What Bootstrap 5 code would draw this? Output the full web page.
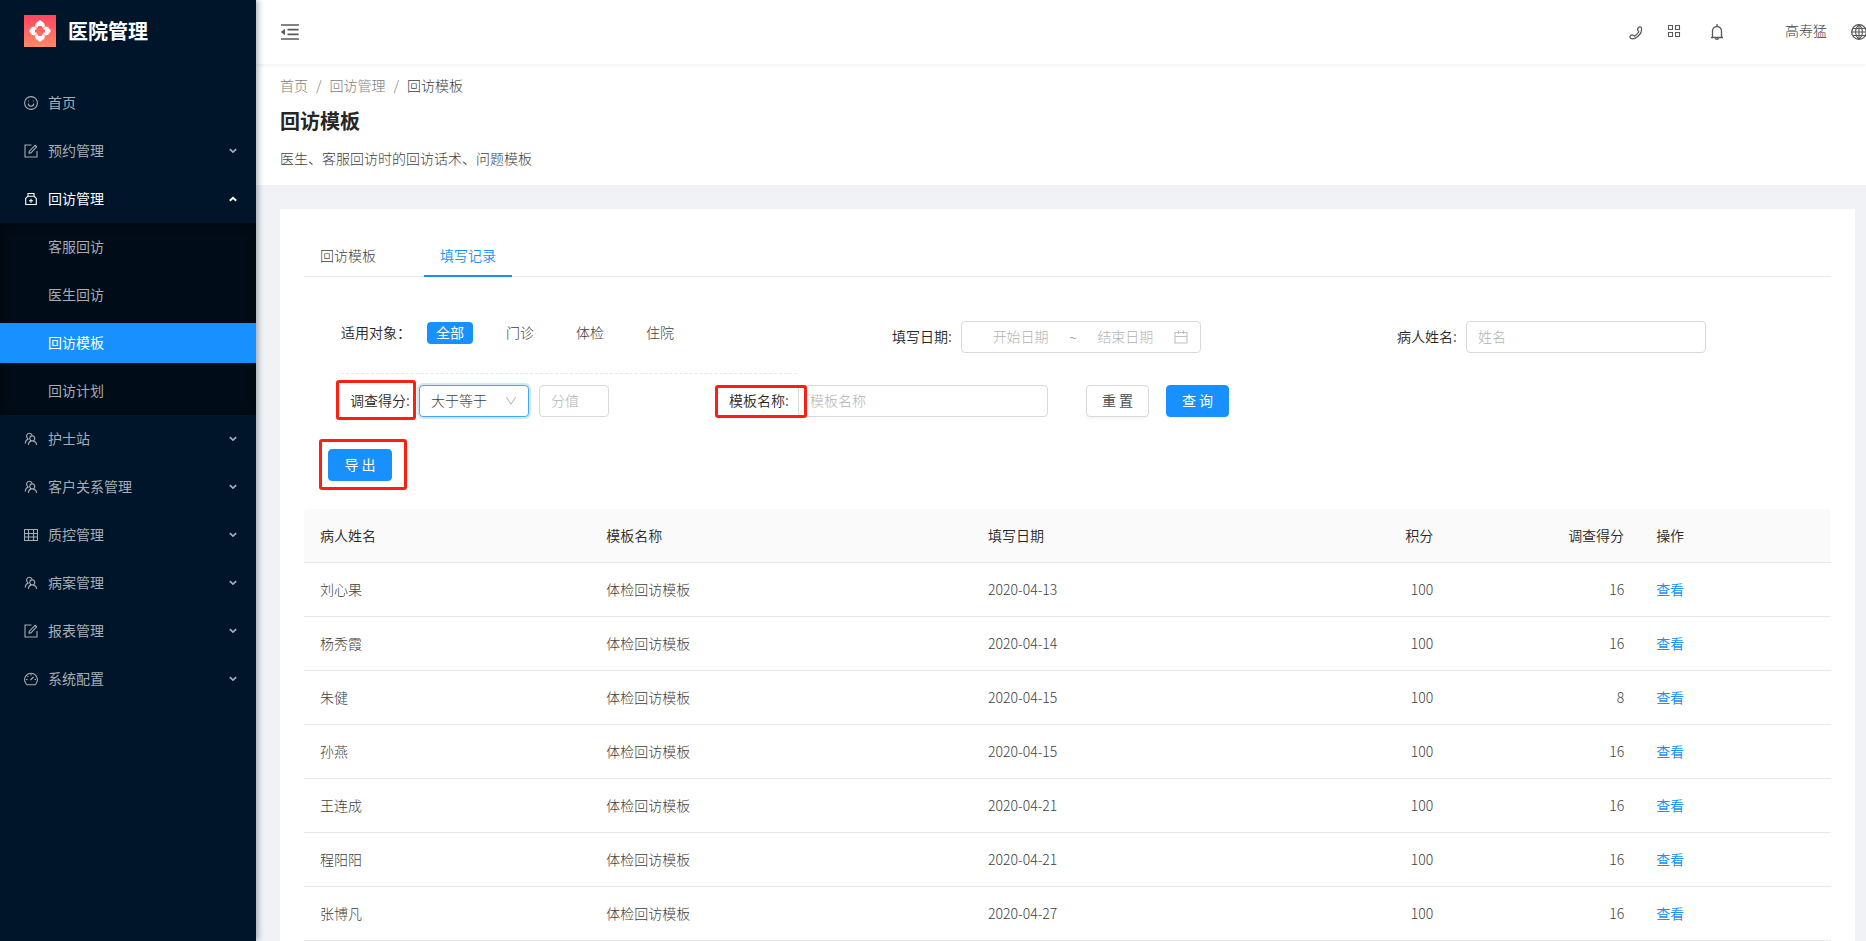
<!DOCTYPE html>
<html lang="zh-CN">
<head>
<meta charset="utf-8">
<meta name="viewport" content="width=device-width, initial-scale=1">
<title>医院管理 - 回访模板</title>
<link href="https://cdn.jsdelivr.net/npm/bootstrap@5.3.0/dist/css/bootstrap.min.css" rel="stylesheet">
<style>
  body { font-family: "Noto Sans CJK SC", sans-serif; font-size: 14px; line-height: 22px; font-weight: 300; color: #404040; background: #f0f2f5; }
  a { color: inherit; text-decoration: none; }
  svg { display: block; flex: none; }
  .ico { fill: none; stroke: currentColor; stroke-width: 1.1; }

  /* Sidebar */
  .side { width: 256px; background: #001529; color: #a6adb4; box-shadow: 2px 0 6px rgba(0,21,41,.35); z-index: 2; font-weight: 400; }
  .brand { height: 64px; padding: 0 24px 2px; gap: 12px; color: #fff; font-size: 20px; font-weight: 700; }
  .menu { padding-top: 15px; }
  .menu a { height: 40px; margin: 4px 0; padding: 0 19px 0 24px; gap: 10px; }
  .menu a span { padding-bottom: 2px; }
  .menu .open { color: #fff; }
  .sub { background: #000c17; box-shadow: inset 0 2px 8px rgba(0,0,0,.45); padding: 0; margin: 0; display: flow-root; }
  .sub li { height: 48px; padding: 4px 0; }
  .menu .sub a { margin: 0; padding: 0 0 2px 48px; }
  .sub a.active { background: #1890ff; color: #fff; }

  /* Header */
  .topbar { height: 64px; padding-left: 24px; background: #fff; box-shadow: 0 1px 4px rgba(0,21,41,.08); z-index: 1; }
  .tools > * { color: #595959; padding: 0; border: 0; background: none; }
  .tools .bell { margin-left: 28px; }
  .tools .user { margin-left: 60px; padding-bottom: 4px; color: #404040; }
  .tools .grid-btn { padding-bottom: 2px; }
  .tools .call { padding-top: 2px; }
  .intro { padding: 10px 24px 16px; background: #fff; }
  .crumbs { --bs-breadcrumb-divider: "/"; --bs-breadcrumb-item-padding-x: 8px; font-size: 14px; margin: 0; color: #7d7d7d; }
  .crumbs .breadcrumb-item + .breadcrumb-item::before { color: #7d7d7d; }
  .crumbs .active { color: #404040; }
  .intro h1 { font-size: 20px; line-height: 28px; font-weight: 700; color: #262626; margin: 11px 0 12px; }

  /* Content panel */
  .panel { background: #fff; margin: 24px 11px 0 24px; padding: 24px 24px 0; }
  .tabs { border-bottom: 1px solid #e8e8e8; gap: 32px; }
  .tabs .nav-link { color: #404040; height: 44px; padding: 11px 16px 9px; border: 0; border-bottom: 2px solid transparent; border-radius: 0; margin-bottom: -1px; }
  .tabs .nav-link.active { color: #1890ff; background: none; border-bottom-color: #1890ff; font-weight: 350; }
  .filters { margin: 44px 6px 0; }
  .filters .who { padding: 1px 18px 0 31px; }
  .who-line { border-bottom: 1px dashed #e8e8e8; height: 52px; gap: 24px; }
  .who-line legend { font-size: 14px; line-height: 20px; width: 70px; margin: 0 -8px 0 0; float: none; color: #262626; font-weight: 350; }
  .pill { padding: 0 9px; border-radius: 4px; color: #404040; height: 22px; line-height: 20px; cursor: pointer; }
  .btn-check:checked + .pill { background: #1890ff; color: #fff; font-weight: 400; }
  .slot { padding: 0 0 0 77px; }
  .lbl { width: 69px; flex: none; color: #262626; font-weight: 350; line-height: 30px; height: 32px; }
  .field, .field:focus { height: 32px; border: 1px solid #d9d9d9; border-radius: 4px; padding: 0 11px 2px; font-size: 14px; font-weight: 300; color: #404040; box-shadow: none; background: #fff; }
  .field::placeholder, .range input::placeholder { color: #b3b3b3; opacity: 1; }
  .w-240 { width: 240px; } .w-250 { width: 250px; } .w-110 { width: 110px; } .w-70 { width: 70px; }
  .range { padding: 0 12px 0 10px; color: #8c8c8c; }
  .range input { flex: 1; min-width: 0; border: 0; padding: 0 0 2px; text-align: center; background: none; font-weight: 300; }
  .range svg { color: #bfbfbf; }
  .picked select, .picked select:focus { appearance: none; border-color: #40a9ff; box-shadow: 0 0 0 2px rgba(24,144,255,.2); outline: 0; }
  .picked svg { position: absolute; right: 12px; top: 11px; color: #bfbfbf; pointer-events: none; }
  .second { margin-top: 11px; padding-left: 46px; }
  .gap-10 { gap: 10px; }
  .name-group { margin-left: 120px; }
  .acts { margin-left: 38px; gap: 17px; }
  .act { height: 32px; min-width: 63px; padding: 0 14px 2px; font-size: 14px; line-height: 20px; border-radius: 4px; --bs-btn-border-color: #d9d9d9; --bs-btn-color: #4d4d4d; box-shadow: 0 2px 0 rgba(0,0,0,.03); white-space: nowrap; }
  .act.btn-primary { --bs-btn-bg: #1890ff; --bs-btn-border-color: #1890ff; --bs-btn-color: #fff; }
  .export { margin: 32px 0 28px 24px; }
  .export .act { min-width: 64px; }

  /* Red call-out frames lying over the controls */
  .framed { position: relative; }
  .framed::after { content: ""; position: absolute; border: 3px solid #ff1f10; border-radius: 3px; pointer-events: none; z-index: 1; }
  .f-score::after { inset: -5px 3px -3px -14px; }
  .f-name::after { inset: 0 -9px -1px -14px; }
  .f-out::after { inset: -10px -15px -9px -9px; }

  .records { table-layout: fixed; margin: 0; border-collapse: separate; border-spacing: 0; --bs-table-bg: transparent; }
  .records > :not(caption) > * > * { padding: 16px; height: 54px; line-height: 21px; border-bottom: 1px solid #e8e8e8; color: #404040; }
  .records > thead > tr > th { background: #fafafa; color: #262626; font-weight: 350; }
  .records thead th:first-child { border-top-left-radius: 4px; }
  .records thead th:last-child { border-top-right-radius: 4px; }
  .records td a { color: #1890ff; font-weight: 400; }
  .c-name, .c-date { width: 18.75%; } .c-tpl { width: 25%; } .c-num { width: 12.5%; }
</style>
</head>
<body>
<svg width="0" height="0" class="position-absolute" aria-hidden="true">
  <symbol id="i-smile" viewBox="0 0 14 14"><circle cx="7" cy="7" r="6.4"/><path d="M4.3 7.6a2.7 2.7 0 0 0 5.4 0M4.2 5h1M8.8 5h1"/></symbol>
  <symbol id="i-form" viewBox="0 0 14 14"><path d="M7.5 1H1v12h12V7M5 9.200l.3-2L11.200 1.300l1.500 1.500L6.900 8.900z"/></symbol>
  <symbol id="i-med" viewBox="0 0 14 14"><path d="M1.700 12.500V6.500L3.700 4.300h6.600l2 2.200v6zM4 4.300V1.500h6v2.800M7 6.700v4M5 8.700h4"/></symbol>
  <symbol id="i-team" viewBox="0 0 14 14"><path d="M8.300 3.900a2.500 2.500 0 1 1 0 5a2.500 2.500 0 0 1 0-5zM4.400 13c0-2.400 1.500-4.100 3.900-4.100s4 1.700 4.400 4.100M1.200 11.500c.2-2.300 1.200-3.700 3-4.400C1.500 5 2.500 1.200 5.300 1.200c1.400 0 2.200.8 2.700 1.900"/></symbol>
  <symbol id="i-table" viewBox="0 0 14 14"><path d="M.5 1.500h13v11H.5zM.5 5.500h13M.5 9h13M4.500 1.500v11M9.500 1.500v11"/></symbol>
  <symbol id="i-dash" viewBox="0 0 14 14"><path d="M3.100 12.700a6.400 6.400 0 1 1 7.800 0zM6.500 8l3-3M7 2v1.500M2 7.500h1.500M10.500 7.500H12M3.500 4l.8.800"/></symbol>
  <symbol id="i-down" viewBox="0 0 8 6"><path d="M.8 1.200L4 4.200l3.200-3" stroke-width="1.700"/></symbol>
  <symbol id="i-up" viewBox="0 0 8 6"><path d="M.8 4.700L4 1.700l3.200 3" stroke-width="1.900"/></symbol>
</svg>

<div class="d-flex min-vh-100 overflow-hidden">
  <aside class="side flex-shrink-0">
    <a href="#" class="brand d-flex align-items-center">
      <svg width="32" height="32" viewBox="0 0 32 32" aria-hidden="true">
        <defs><linearGradient id="lg" x1="0" y1="0" x2="0" y2="1"><stop offset="0" stop-color="#ff4460"/><stop offset="1" stop-color="#ff8a65"/></linearGradient></defs>
        <path fill="url(#lg)" d="M0 0h32v32H0z"/>
        <path fill="#fff" d="M16 5l4 3 1 3-1.500 1.500H18V11h-4v1.500h-1.500L11 11l1-3zM16 27l4-3 1-3-1.500-1.500H18V21h-4v-1.500h-1.500L11 21l1 3zM5 16l3-4 2.500-.5 2 1.500v1.500H11v3h1.500V19l-2 1.500L8 20zM27 16l-3-4-2.500-.5-2 1.500v1.500H21v3h-1.500V19l2 1.500L24 20z"/>
      </svg>
      <span>医院管理</span>
    </a>
    <nav class="menu">
      <a href="#" class="d-flex align-items-center"><svg class="ico" width="14" height="14"><use href="#i-smile"/></svg><span>首页</span></a>
      <a href="#" class="d-flex align-items-center mt-2"><svg class="ico" width="14" height="14"><use href="#i-form"/></svg><span>预约管理</span><svg class="ico ms-auto" width="8" height="6"><use href="#i-down"/></svg></a>
      <a href="#" class="open d-flex align-items-center mt-2"><svg class="ico" width="14" height="14"><use href="#i-med"/></svg><span>回访管理</span><svg class="ico ms-auto" width="8" height="6"><use href="#i-up"/></svg></a>
      <ul class="sub list-unstyled">
        <li><a href="#" class="d-flex align-items-center">客服回访</a></li>
        <li><a href="#" class="d-flex align-items-center">医生回访</a></li>
        <li><a href="#" class="active d-flex align-items-center" aria-current="page">回访模板</a></li>
        <li><a href="#" class="d-flex align-items-center">回访计划</a></li>
      </ul>
      <a href="#" class="d-flex align-items-center"><svg class="ico" width="14" height="14"><use href="#i-team"/></svg><span>护士站</span><svg class="ico ms-auto" width="8" height="6"><use href="#i-down"/></svg></a>
      <a href="#" class="d-flex align-items-center mt-2"><svg class="ico" width="14" height="14"><use href="#i-team"/></svg><span>客户关系管理</span><svg class="ico ms-auto" width="8" height="6"><use href="#i-down"/></svg></a>
      <a href="#" class="d-flex align-items-center mt-2"><svg class="ico" width="14" height="14"><use href="#i-table"/></svg><span>质控管理</span><svg class="ico ms-auto" width="8" height="6"><use href="#i-down"/></svg></a>
      <a href="#" class="d-flex align-items-center mt-2"><svg class="ico" width="14" height="14"><use href="#i-team"/></svg><span>病案管理</span><svg class="ico ms-auto" width="8" height="6"><use href="#i-down"/></svg></a>
      <a href="#" class="d-flex align-items-center mt-2"><svg class="ico" width="14" height="14"><use href="#i-form"/></svg><span>报表管理</span><svg class="ico ms-auto" width="8" height="6"><use href="#i-down"/></svg></a>
      <a href="#" class="d-flex align-items-center mt-2"><svg class="ico" width="14" height="14"><use href="#i-dash"/></svg><span>系统配置</span><svg class="ico ms-auto" width="8" height="6"><use href="#i-down"/></svg></a>
    </nav>
  </aside>

  <div class="flex-fill d-flex flex-column">
    <header class="topbar d-flex align-items-center position-relative">
      <button type="button" class="btn p-0 border-0" aria-label="收起菜单">
        <svg width="20" height="20" viewBox="64 64 896 896" fill="#595959"><path d="M408 442h480c4.400 0 8-3.600 8-8v-56c0-4.400-3.600-8-8-8H408c-4.400 0-8 3.600-8 8v56c0 4.400 3.600 8 8 8zm-8 204c0 4.400 3.600 8 8 8h480c4.400 0 8-3.600 8-8v-56c0-4.400-3.600-8-8-8H408c-4.400 0-8 3.600-8 8v56zm504-486H120c-4.400 0-8 3.600-8 8v56c0 4.400 3.600 8 8 8h784c4.400 0 8-3.600 8-8v-56c0-4.400-3.600-8-8-8zm0 632H120c-4.400 0-8 3.600-8 8v56c0 4.400 3.600 8 8 8h784c4.400 0 8-3.600 8-8v-56c0-4.400-3.600-8-8-8zM115.400 518.900L271.700 642c5.800 4.600 14.400.5 14.400-6.900V388.900c0-7.400-8.500-11.500-14.400-6.900L115.400 505.100a8.740 8.740 0 0 0 0 13.800z"/></svg>
      </button>
      <div class="tools ms-auto d-flex align-items-center">
        <button type="button" aria-label="电话" class="call"><svg class="ico" width="14" height="14" viewBox="0 0 14 14"><path stroke-width="1.200" d="M9.500 1.500c1-1 2.500-.7 3 .5.500 3-1 6-3.400 8.200C7 12.200 4.500 13 2.500 12.700c-1.500-.5-2-1.900-1.100-2.900 1-.9 2.300-1 3.100-.2l.9.500C7.600 9 8.900 7.500 9.800 5.800l-.6-.9c-.8-1-.7-2.400.3-3.400z"/></svg></button>
        <button type="button" aria-label="应用" class="ms-4 grid-btn"><svg class="ico" width="14" height="14" viewBox="0 0 14 14"><path d="M1.500 1.500h4v4h-4zM8.500 1.500h4v4h-4zM1.500 8.500h4v4h-4zM8.500 8.500h4v4h-4z"/></svg></button>
        <button type="button" aria-label="通知" class="bell"><svg class="ico" width="16" height="18" viewBox="0 0 16 18"><path stroke-width="1.300" d="M2 14.500h12M3.500 14.500V8a4.500 4.500 0 0 1 9 0v6.500M8 3.500V1M6.400 14.700c.2 2.200 3 2.200 3.200 0"/></svg></button>
        <a href="#" class="user">高寿猛</a>
        <button type="button" aria-label="语言" class="ms-4"><svg class="ico" width="15" height="16" viewBox="0 0 15 16"><circle cx="8" cy="8" r="7.300" stroke-width="1.300"/><path d="M8 .5v15M.7 8h14.600M2 4.500h12M2 11.500h12M8 .7c-4.500 4-4.500 10.600 0 14.600M8 .7c4.500 4 4.500 10.600 0 14.600"/></svg></button>
      </div>
    </header>

    <section class="intro">
      <nav aria-label="breadcrumb">
        <ol class="breadcrumb crumbs">
          <li class="breadcrumb-item"><a href="#">首页</a></li>
          <li class="breadcrumb-item"><a href="#">回访管理</a></li>
          <li class="breadcrumb-item active" aria-current="page">回访模板</li>
        </ol>
      </nav>
      <h1>回访模板</h1>
      <p class="mb-0">医生、客服回访时的回访话术、问题模板</p>
    </section>

    <main class="panel flex-grow-1">
      <ul class="nav tabs">
        <li class="nav-item"><a class="nav-link" href="#">回访模板</a></li>
        <li class="nav-item"><a class="nav-link active" href="#" aria-current="true">填写记录</a></li>
      </ul>

      <form>
        <div class="row g-0 filters">
          <fieldset class="col-4 who">
            <div class="who-line d-flex align-items-start" role="radiogroup" aria-labelledby="who">
              <legend id="who">适用对象：</legend>
              <div><input class="btn-check" type="radio" name="who" id="w1" checked><label class="pill d-block" for="w1">全部</label></div>
              <div><input class="btn-check" type="radio" name="who" id="w2"><label class="pill d-block" for="w2">门诊</label></div>
              <div><input class="btn-check" type="radio" name="who" id="w3"><label class="pill d-block" for="w3">体检</label></div>
              <div><input class="btn-check" type="radio" name="who" id="w4"><label class="pill d-block" for="w4">住院</label></div>
            </div>
          </fieldset>
          <div class="col-4 slot d-flex align-items-start">
            <label class="lbl" for="from">填写日期:</label>
            <div class="field range w-240 d-flex align-items-center">
              <input id="from" type="text" placeholder="开始日期"><span>~</span><input type="text" placeholder="结束日期" aria-label="结束日期">
              <svg class="ico" width="14" height="14" viewBox="0 0 14 14"><path d="M1 2.500h12v10.500H1zM1 6.500h12M4.500.5v3.500M9.500.5v3.500"/></svg>
            </div>
          </div>
          <div class="col-4 slot d-flex align-items-start">
            <label class="lbl" for="patient">病人姓名:</label>
            <input id="patient" type="text" class="form-control field w-240" placeholder="姓名">
          </div>
        </div>

        <div class="second d-flex align-items-center">
          <label class="lbl framed f-score" for="cmp">调查得分:</label>
          <div class="d-flex gap-10">
            <div class="picked position-relative">
              <select id="cmp" class="field w-110"><option>大于等于</option><option>小于等于</option></select>
              <svg class="ico" width="12" height="10" viewBox="0 0 12 10"><path d="M1.200 1L6 8l4.800-7"/></svg>
            </div>
            <input type="text" class="form-control field w-70" placeholder="分值" aria-label="分值">
          </div>
          <div class="name-group d-flex align-items-center">
            <label class="lbl framed f-name" for="tpl">模板名称:</label>
            <input id="tpl" type="text" class="form-control field w-250" placeholder="模板名称">
          </div>
          <div class="d-flex acts">
            <button type="reset" class="btn act">重 置</button>
            <button type="submit" class="btn btn-primary act">查 询</button>
          </div>
        </div>

        <div class="export d-flex">
          <div class="framed f-out"><button type="button" class="btn btn-primary act">导 出</button></div>
        </div>
      </form>

      <table class="table records">
        <colgroup><col class="c-name"><col class="c-tpl"><col class="c-date"><col class="c-num"><col class="c-num"><col class="c-num"></colgroup>
        <thead><tr><th>病人姓名</th><th>模板名称</th><th>填写日期</th><th class="text-end">积分</th><th class="text-end">调查得分</th><th>操作</th></tr></thead>
        <tbody>
          <tr><td>刘心果</td><td>体检回访模板</td><td>2020-04-13</td><td class="text-end">100</td><td class="text-end">16</td><td><a href="#">查看</a></td></tr>
          <tr><td>杨秀霞</td><td>体检回访模板</td><td>2020-04-14</td><td class="text-end">100</td><td class="text-end">16</td><td><a href="#">查看</a></td></tr>
          <tr><td>朱健</td><td>体检回访模板</td><td>2020-04-15</td><td class="text-end">100</td><td class="text-end">8</td><td><a href="#">查看</a></td></tr>
          <tr><td>孙燕</td><td>体检回访模板</td><td>2020-04-15</td><td class="text-end">100</td><td class="text-end">16</td><td><a href="#">查看</a></td></tr>
          <tr><td>王连成</td><td>体检回访模板</td><td>2020-04-21</td><td class="text-end">100</td><td class="text-end">16</td><td><a href="#">查看</a></td></tr>
          <tr><td>程阳阳</td><td>体检回访模板</td><td>2020-04-21</td><td class="text-end">100</td><td class="text-end">16</td><td><a href="#">查看</a></td></tr>
          <tr><td>张博凡</td><td>体检回访模板</td><td>2020-04-27</td><td class="text-end">100</td><td class="text-end">16</td><td><a href="#">查看</a></td></tr>
        </tbody>
      </table>
    </main>
  </div>
</div>
<script src="https://cdn.jsdelivr.net/npm/bootstrap@5.3.0/dist/js/bootstrap.bundle.min.js"></script>
</body>
</html>
